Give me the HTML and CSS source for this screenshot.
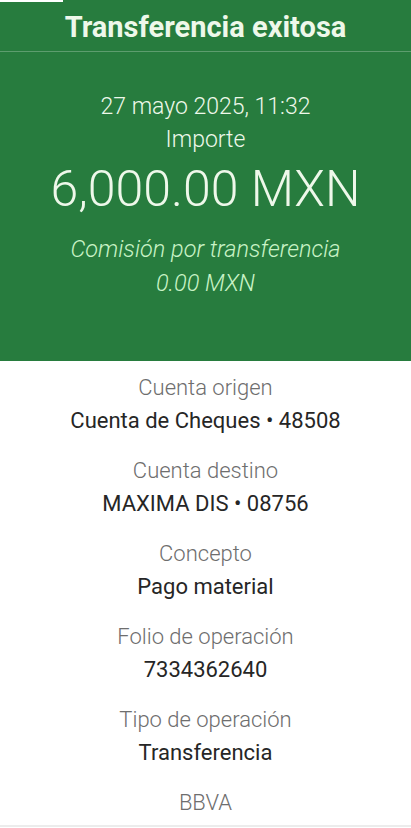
FILE: index.html
```html
<!DOCTYPE html>
<html lang="es">
<head>
  <meta charset="UTF-8" />
  <meta name="viewport" content="width=device-width, initial-scale=1.0" />
  <title>Transferencia exitosa</title>
  <link rel="stylesheet" href="styles.css">
</head>
<body>

  <div class="status-strip"></div>

  <header class="hero">
    <h1 class="hero-title">Transferencia exitosa</h1>
    <div class="hero-body">
      <div class="hero-date">27 mayo 2025, 11:32</div>
      <div class="hero-label">Importe</div>
      <div class="hero-amount">6,000.00 MXN</div>
      <div class="hero-fee">Comisión por transferencia</div>
      <div class="hero-fee">0.00 MXN</div>
    </div>
  </header>

  <section class="details">
    <div class="detail">
      <div class="detail-label">Cuenta origen</div>
      <div class="detail-value">Cuenta de Cheques • 48508</div>
    </div>
    <div class="detail">
      <div class="detail-label">Cuenta destino</div>
      <div class="detail-value">MAXIMA DIS • 08756</div>
    </div>
    <div class="detail">
      <div class="detail-label">Concepto</div>
      <div class="detail-value">Pago material</div>
    </div>
    <div class="detail">
      <div class="detail-label">Folio de operación</div>
      <div class="detail-value">7334362640</div>
    </div>
    <div class="detail">
      <div class="detail-label">Tipo de operación</div>
      <div class="detail-value">Transferencia</div>
    </div>
    <div class="detail">
      <div class="detail-label">BBVA</div>
    </div>
  </section>

</body>
</html>
```

FILE: styles.css
```css
body {
  margin: 0;
  font-family: Roboto, 'Liberation Sans', sans-serif;
  background: #fff;
  color: #1c1c1c;
  height: 828px;
  overflow: hidden;
  position: relative;
}

.status-strip {
  position: absolute;
  top: 0;
  left: 0;
  width: 63px;
  height: 2px;
  background: #fff;
}

.hero {
  background: #277c3e;
  color: #eef8ea;
  height: 361px;
  text-align: center;
}

.hero-title {
  margin: 0;
  height: 51px;
  line-height: 54px;
  font-size: 29px;
  font-weight: 700;
  border-bottom: 1px solid rgba(255, 255, 255, 0.25);
}

.hero-body {
  padding-top: 38px;
}

.hero-date,
.hero-label {
  font-size: 23px;
  line-height: 33px;
  font-weight: 300;
}

.hero-amount {
  font-size: 50px;
  font-weight: 300;
  line-height: 66px;
  margin-bottom: 10px;
}

.hero-fee {
  font-size: 23.5px;
  line-height: 34px;
  font-style: italic;
  font-weight: 300;
  color: #c9f3c6;
}

.details {
  text-align: center;
  padding-top: 10px;
}

.detail {
  padding-bottom: 17px;
}

.detail-label {
  font-size: 22px;
  line-height: 33px;
  font-weight: 300;
  color: #6e6e6e;
}

.detail-value {
  font-size: 22px;
  line-height: 33px;
  font-weight: 400;
  color: #262626;
}

.details::after {
  content: '';
  position: absolute;
  left: 0;
  right: 0;
  bottom: 1px;
  height: 2px;
  background: #ececec;
}
```
